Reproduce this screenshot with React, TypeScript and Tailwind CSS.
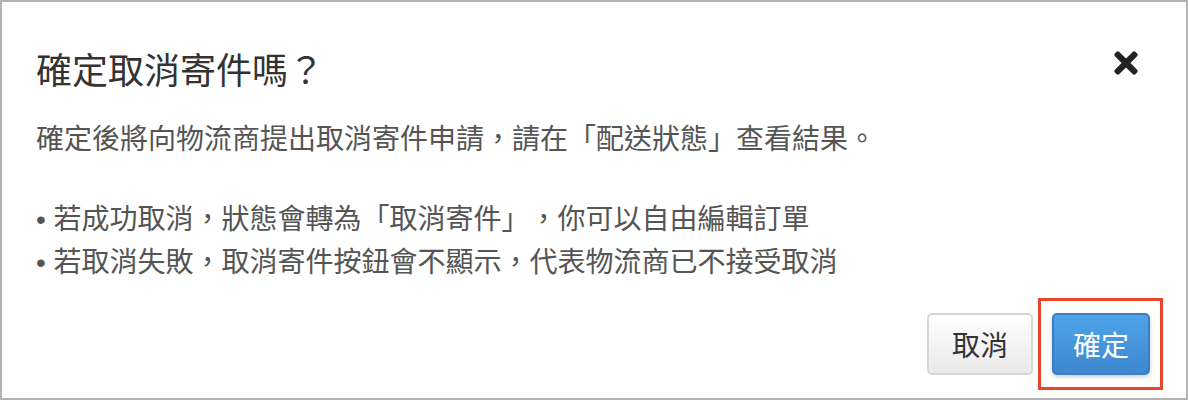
import { FaTimes } from "react-icons/fa";

const bullets = [
  "若成功取消，狀態會轉為「取消寄件」，你可以自由編輯訂單",
  "若取消失敗，取消寄件按鈕會不顯示，代表物流商已不接受取消",
];

export default function App() {
  return (
    <div className="w-[1188px] h-[400px] bg-white border-2 border-[#b3b3b3] flex flex-col font-['Noto_Sans_CJK_TC','Noto_Sans',sans-serif] [text-spacing-trim:space-all]">
      {/* Header */}
      <div className="flex items-center justify-between pl-[34px] pr-[43px] pt-[42px]">
        <h3 className="text-[36px] leading-[48px] text-[#333] font-normal">確定取消寄件嗎？</h3>
        <button className="text-[#222] -mt-[10px]">
          <FaTimes size={34} />
        </button>
      </div>

      {/* Body */}
      <div className="pl-[34px] pt-[25px] text-[28px] leading-[40px] text-[#555]">
        <p>確定後將向物流商提出取消寄件申請，請在「配送狀態」查看結果。</p>
        <p className="mt-[40px]">
          {bullets.map((b) => (
            <span key={b} className="block">
              <span className="font-['Liberation_Sans',sans-serif]">• </span>
              {b}
            </span>
          ))}
        </p>
      </div>

      {/* Footer */}
      <div className="flex justify-end gap-[19px] pr-[36px] pt-[30px]">
        <button className="w-[106px] h-[62px] rounded-[5px] border-2 border-[#d6d6d6] bg-gradient-to-b from-white to-[#e9e9e9] text-[28px] text-[#333]">
          取消
        </button>
        <div className="relative">
          <button className="w-[98px] h-[62px] rounded-[5px] border-2 border-[#3a7fc1] bg-gradient-to-b from-[#4fa3e8] to-[#3d88cf] text-[28px] text-white shadow-[0_2px_4px_rgba(0,0,0,0.2)]">
            確定
          </button>
          <span className="absolute -left-[14px] -right-[13px] -top-[15px] -bottom-[15px] border-[3px] border-[#e8432b] pointer-events-none" />
        </div>
      </div>
    </div>
  );
}
